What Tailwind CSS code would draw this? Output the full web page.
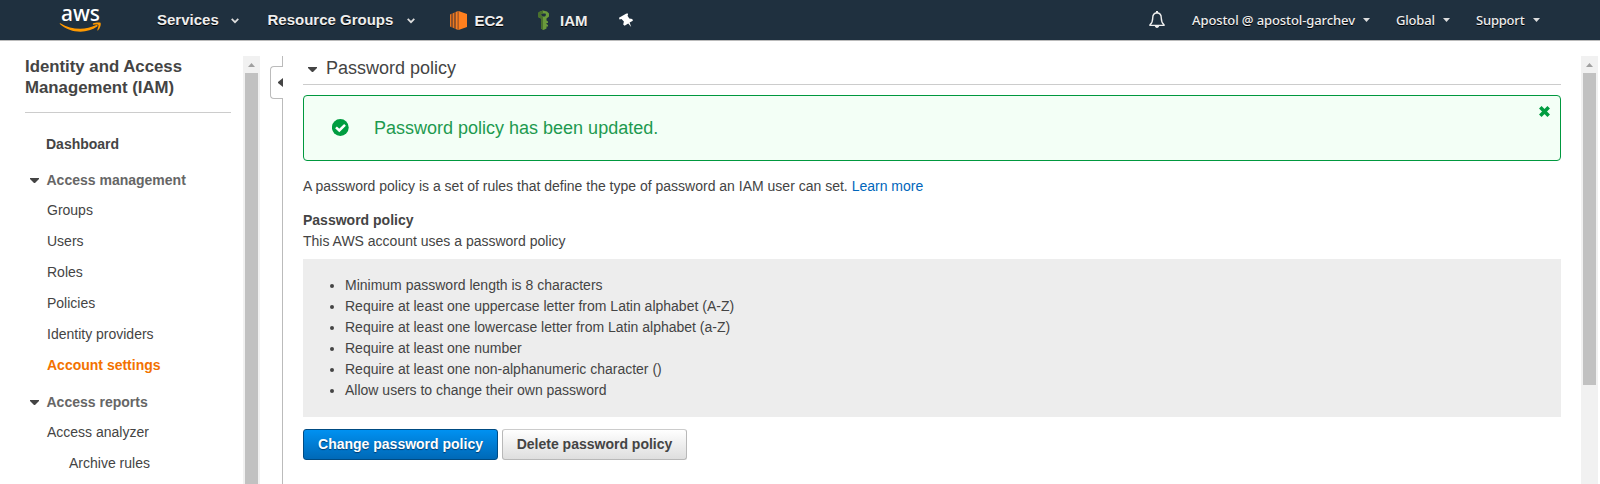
<!DOCTYPE html>
<html lang="en">
<head>
<meta charset="utf-8">
<title>IAM - Password policy</title>
<script src="https://cdn.jsdelivr.net/npm/@tailwindcss/browser@4"></script>
</head>
<body class="h-[484px] overflow-hidden bg-white text-[14px] leading-[21px] text-[#444] font-['Liberation_Sans',Arial,sans-serif]">
<header class="flex h-[41px] items-center border-b border-[#bbb] bg-[#1f303f] text-[15px] font-bold text-[#eee] [text-shadow:0_1px_0_#000]">
  <svg class="ml-[60px] w-[42px] h-[40px] shrink-0 overflow-visible" viewBox="0 0 42 40" aria-label="aws">
    <text x="1" y="20.500" font-family="Noto Sans, sans-serif" font-size="21" font-weight="500" fill="#fff" textLength="39" lengthAdjust="spacingAndGlyphs" style="text-shadow:none">aws</text>
    <path d="M.3 23.200c11 6.800 25 7.300 36 1.900 1.200-.6 2 .7.900 1.500C27 34 10.500 33.500.1 24.300c-.6-.6-.4-1.400.2-1.100z" fill="#f90"/>
    <path d="M33 23.500c2.500-1.200 6.400-1.200 7.500-.7.800 1.500-.3 5.500-2.300 7.400-.5.400-1.100.2-.9-.3.600-1.600 1.600-4.100 1.100-4.800s-3.300-.5-4.900-.3c-.6.100-.9-.9-.5-1.300z" fill="#f90"/>
  </svg>
  <span class="-mt-px ml-[55px] w-[74px]">Services</span>
  <svg class="mt-[2px] w-[8px] h-[6px] shrink-0" viewBox="0 0 8 6"><path d="M.7.8 4 4.200 7.300.8" fill="none" stroke="#ddd" stroke-width="1.700"/></svg>
  <span class="-mt-px ml-[28.5px] w-[139px] whitespace-nowrap">Resource Groups</span>
  <svg class="mt-[2px] w-[8px] h-[6px] shrink-0" viewBox="0 0 8 6"><path d="M.7.8 4 4.200 7.300.8" fill="none" stroke="#ddd" stroke-width="1.700"/></svg>
  <svg class="ml-[35.5px] w-[17px] h-[19px] shrink-0" viewBox="0 0 17 19"><path d="M8.500 0 17 3v13l-8.500 3z" fill="#ff7f1e"/><path d="M8.500 0v19L5.500 17.900V1.100z" fill="#f78022"/><path d="M0 3.500 1.500 2.700v13.600L0 15.500zM2.500 2.400l2-.9v16l-2-.9z" fill="#e9771f"/><path d="M1.500 2.800l1-.4v14.200l-1-.4zM4.500 1.500l1-.4v16.800l-1-.4zM7.500.4l1-.4v19l-1-.4z" fill="#9d5025"/></svg>
  <span class="ml-[7.5px] w-[29.5px]">EC2</span>
  <svg class="ml-[33px] w-[13px] h-[20px] shrink-0" viewBox="0 0 13 20"><path fill-rule="evenodd" d="M3 1.500 6 .5l4 1 2 2v3L9.500 8.500v2l1.500 1v1.500H9.500v1L11 15v1.500H9.500v2L6.500 20 4 18.500V8.500L1 7V3zM4.500 3.500 4 5l1.500 1.500h2.500L9 5 8.500 3.500z" fill="#6a9a3c"/><path fill-rule="evenodd" d="M3 1.500 6 .5v3H4.500L4 5l1.500 1.500H6V20l-2-1.500V8.500L1 7V3z" fill="#4a712d"/></svg>
  <span class="ml-[10px] w-[29px]">IAM</span>
  <svg class="ml-[30px] w-[14px] h-[15px] shrink-0" viewBox="0 0 14 15"><path d="M7 .8 8.500.3l.6 1.500-.6 1 1.800 2.700 3 .4.600 1.900-3.300 1.700 1.600 4.400-3-3.500-3.600 2.300-1.400-1.300.7-2.900L2.500 6l-2 .4L0 4.700z" fill="#fff"/></svg>
  <div class="ml-auto flex items-center font-['Noto_Sans',sans-serif] text-[13px] font-medium">
    <svg class="w-[16px] h-[18px] shrink-0" viewBox="0 0 16 18"><path d="M8 1.800c-3.300.2-4.300 2.700-4.300 5.400 0 3.300-.8 5-2.700 6.600v.6h14v-.6c-1.900-1.600-2.700-3.300-2.700-6.600 0-2.700-1-5.200-4.300-5.400z" fill="none" stroke="#eee" stroke-width="1.400"/><path d="M7 0h2v2H7zM5.700 14.500h4.600C10 17.800 6 17.800 5.700 14.500z" fill="#eee"/></svg>
    <span class="ml-[27px] w-[171px] whitespace-nowrap tracking-[-0.1px]">Apostol @ apostol-garchev</span>
    <svg class="w-[7px] h-[4px]" viewBox="0 0 7 4"><path d="M0 0h7L3.500 4z" fill="#ddd"/></svg>
    <span class="ml-[26px] w-[47px] tracking-[-0.2px]">Global</span>
    <svg class="w-[7px] h-[4px]" viewBox="0 0 7 4"><path d="M0 0h7L3.500 4z" fill="#ddd"/></svg>
    <span class="ml-[26px] w-[57px] tracking-[-0.2px]">Support</span>
    <svg class="mr-[60px] w-[7px] h-[4px]" viewBox="0 0 7 4"><path d="M0 0h7L3.500 4z" fill="#ddd"/></svg>
  </div>
</header>
<div class="flex h-[443px] pt-[15px]">
  <aside class="w-[243px] shrink-0 pl-[25px]">
    <h2 class="w-[206px] border-b border-[#ccc] pb-[14px] text-[16.8px] font-bold">Identity and Access Management (IAM)</h2>
    <nav class="mt-[16px] pl-[22px] leading-[30px]">
      <a class="-ml-px block h-[36px] font-bold">Dashboard</a>
      <div class="-ml-[17.5px] flex h-[30px] items-center font-bold text-[#666]"><svg class="mr-[8px] mt-px w-[9px] h-[5px]" viewBox="0 0 9 5"><path d="M0 0h9v1L5 5H4L0 1z" fill="#444"/></svg>Access management</div>
      <a class="block h-[31px]">Groups</a>
      <a class="block h-[31px]">Users</a>
      <a class="block h-[31px]">Roles</a>
      <a class="block h-[31px]">Policies</a>
      <a class="block h-[31px]">Identity providers</a>
      <a class="block h-[37px] font-bold text-[#f37200]">Account settings</a>
      <div class="-ml-[17.5px] flex h-[30px] items-center font-bold text-[#666]"><svg class="mr-[8px] mt-px w-[9px] h-[5px]" viewBox="0 0 9 5"><path d="M0 0h9v1L5 5H4L0 1z" fill="#444"/></svg>Access reports</div>
      <a class="block h-[31px]">Access analyzer</a>
      <a class="block h-[31px] pl-[22px]">Archive rules</a>
    </nav>
  </aside>
  <div class="flex w-[17px] shrink-0 flex-col items-center bg-[#f1f1f1]">
    <svg class="h-[17px] w-[17px] shrink-0" viewBox="0 0 17 17"><path d="M5 11 8.500 7 12 11z" fill="#a0a0a0"/></svg>
    <div class="w-[13px] grow bg-[#c1c1c1]"></div>
  </div>
  <div class="ml-[10px] flex w-[13px] shrink-0 flex-col">
    <div class="h-[10px] border-r border-[#bbb]"></div>
    <div class="flex h-[33px] items-center justify-end rounded-l-[4px] border border-r-0 border-[#bbb]"><svg class="h-[9px] w-[5px]" viewBox="0 0 5 9"><path d="M5 0v9L0 5V4z" fill="#444"/></svg></div>
    <div class="grow border-r border-[#bbb]"></div>
  </div>
  <main class="ml-[20px] w-[1258px] shrink-0">
    <h1 class="flex h-[29px] items-center border-b border-[#ccc] pb-[3px] pl-[4.5px] text-[18px]"><svg class="mr-[9.5px] mt-[2px] w-[9px] h-[5px]" viewBox="0 0 9 5"><path d="M0 0h9v1L5 5H4L0 1z" fill="#444"/></svg>Password policy</h1>
    <div class="mt-[10px] flex h-[66px] items-center rounded-[4px] border border-[#00983e] bg-[#f3fff6] pl-[28px] text-[18px] text-[#1d9a4f]">
      <svg class="-mt-[2px] mr-[25px] h-[17px] w-[17px]" viewBox="0 0 17 17"><circle cx="8.300" cy="8.500" r="8.400" fill="#009d40"/><path d="M4 8.300 7.300 11.500 13 5.800" fill="none" stroke="#fff" stroke-width="2.500"/></svg>
      <p>Password policy has been updated.</p>
      <svg class="mr-[10px] mt-[10px] ml-auto h-[11px] w-[11px] self-start" viewBox="0 0 11 11"><path d="M1.300 1.300l8.400 8.400M9.700 1.300l-8.400 8.400" stroke="#009d40" stroke-width="3.600"/></svg>
    </div>
    <p class="mt-[15px]">A password policy is a set of rules that define the type of password an IAM user can set. <a class="text-[#0066bb]">Learn more</a></p>
    <h3 class="mt-[13px] font-bold">Password policy</h3>
    <p>This AWS account uses a password policy</p>
    <ul class="mt-[7px] list-disc bg-[#ededed] py-[16px] pl-[42px]">
      <li>Minimum password length is 8 characters</li>
      <li>Require at least one uppercase letter from Latin alphabet (A-Z)</li>
      <li>Require at least one lowercase letter from Latin alphabet (a-Z)</li>
      <li>Require at least one number</li>
      <li>Require at least one non-alphanumeric character ()</li>
      <li>Allow users to change their own password</li>
    </ul>
    <div class="mt-[12px] flex gap-[4px] font-bold">
      <button class="h-[31px] w-[195px] rounded-[3px] border border-[#004b83] bg-linear-to-b from-[#0091f1] to-[#0069b7] text-white [text-shadow:0_1px_1px_#003a6b]">Change password policy</button>
      <button class="h-[31px] w-[185px] rounded-[3px] border border-[#b8b8b8] border-t-[#ccc] bg-linear-to-b from-white to-[#dedede]">Delete password policy</button>
    </div>
  </main>
  <div class="ml-[20px] flex w-[17px] shrink-0 flex-col items-center bg-[#f1f1f1]">
    <svg class="h-[17px] w-[17px] shrink-0" viewBox="0 0 17 17"><path d="M5 11 8.500 7 12 11z" fill="#a0a0a0"/></svg>
    <div class="h-[312px] w-[13px] bg-[#c1c1c1]"></div>
  </div>
</div>
</body>
</html>
